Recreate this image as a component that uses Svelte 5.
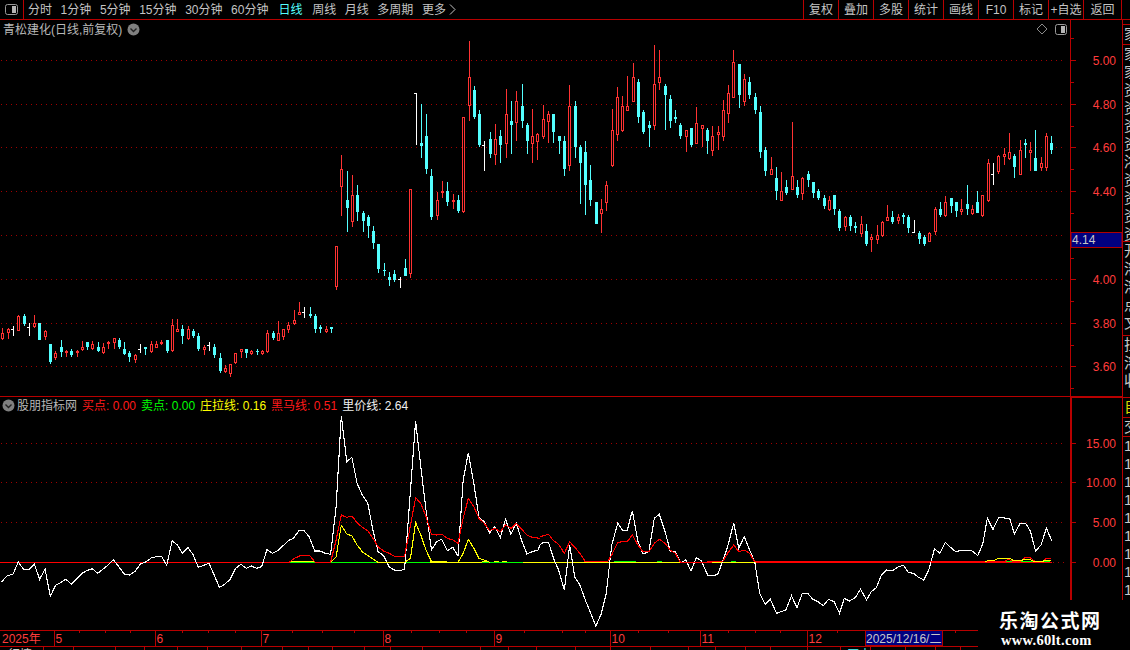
<script>
  const tools = ['分时','1分钟','5分钟','15分钟','30分钟','60分钟','日线','周线','月线','多周期','更多'];
  const actions = ['复权','叠加','多股','统计','画线','F10','标记','+自选','返回'];

  // [type, high, low, bodyTop, bodyBottom] in 3x crop coordinates; w = [type, high, low, tick]
  const partA = [['r',145,180,160,177],['r',145,178,148,160],['w',140,168,148],['r',105,155,108,155],['c',102,140,108,134],['w',130,168,142],['r',105,146,130,143],['c',130,180,130,180],['r',150,180,154,172],['c',192,252,192,247],['r',215,240,220,236],['c',180,233,201,218],['r',210,233,213,221],['c',208,233,214,226],['r',210,233,214,221],['r',183,213,202,210],['c',186,212,186,201],['r',184,210,193,209],['c',186,218,201,213],['r',190,222,202,220],['r',183,207,186,194],['r',175,207,175,189],['c',175,207,180,201],['c',186,225,207,224],['c',214,246,220,233],['r',222,251,226,242],['w',192,219,208],['c',201,225,201,207],['r',183,219,192,216],['r',184,206,193,204],['r',180,196,186,194],['c',180,219,180,213],['r',117,216,135,215],['r',117,158,148,156],['c',136,192,148,168],['r',139,180,148,177],['c',148,174,154,168],['c',160,213,168,207],['r',195,225,201,210],['w',186,213,195],['c',192,234,201,225],['c',219,279,234,273],['r',255,280,264,276],['r',252,291,252,282],['r',220,252,220,249],['r',207,234,208,216],['c',207,234,207,219],['r',210,225,213,222],['c',207,225,213,218],['r',212,225,213,222],['r',150,219,159,216],['c',153,181,159,175],['r',123,183,159,183],['r',147,180,148,171],['r',126,159,135,150],['r',90,135,121,133],['r',66,107,96,105],['w',81,114,97],['c',81,114,102,108],['c',102,159,108,147],['c',136,159,141,147],['r',139,159,148,156],['c',141,159,141,147]];
  const partB = [['r',619,750,619,743],['r',345,530,388,443],['c',393,578,480,506],['r',405,563,465,548],['c',435,545,465,518],['c',513,578,519,545],['c',525,596,531,558],['c',558,629,573,611],['c',612,700,612,689],['c',670,710,690,695],['c',697,740,711,722],['c',690,728,702,722],['w',712,745,717],['c',657,710,684,710],['r',447,716,448,704],['w',160,315,160],['c',192,354,309,320],['c',222,402,288,387],['c',387,540,408,531],['r',456,540,480,528],['r',423,474,453,461],['c',426,498,453,486],['r',462,507,480,488],['c',465,519,480,513],['r',232,519,232,516],['r',3,243,111,199],['c',138,237,150,231],['c',210,321,222,315],['w',303,393,316],['c',276,354,297,342],['r',252,375,297,345],['c',270,369,288,315],['r',147,354,222,312],['c',183,342,243,255],['r',153,303,183,249],['c',132,264,198,243],['c',249,342,255,303],['r',207,369,288,312],['r',279,360,282,306],['r',195,297,237,291],['r',213,309,222,246],['c',222,309,222,276],['c',288,342,288,303],['c',288,408,303,387],['r',135,393,198,378],['c',183,354,198,321],['c',315,492,321,369],['c',303,525,336,435],['c',375,498,420,480],['c',486,552,486,552],['r',477,579,507,522],['r',423,513,435,489],['r',207,381,270,378],['r',141,303,171,285],['r',168,276,198,273],['r',108,213,198,213],['r',69,186,111,186],['c',117,249,126,231],['c',210,282,216,276],['c',243,321,255,264],['r',15,270,132,258],['r',30,150,111,129],['c',132,270,138,165],['c',165,264,177,243],['c',210,249,231,237],['c',249,297,255,288],['r',270,336,270,291],['c',264,321,264,316],['r',201,312,249,312],['r',255,321,255,267],['c',264,342,270,303],['r',258,348,288,333],['r',258,330,276,285],['r',180,303,210,291],['r',135,249,159,222],['r',30,174,66,174],['c',72,204,72,165],['r',102,198,117,186],['c',111,177,126,165],['c',159,222,171,210],['c',198,354,216,336],['c',321,408,330,393],['r',351,405,387,405],['c',381,480,414,453],['r',396,483,453,483],['c',420,465,441,459],['r',246,450,408,450],['c',420,474,441,465],['r',411,480,414,462],['c',393,441,402,420],['c',426,474,426,459],['c',447,480,453,474],['c',465,507,474,498],['r',468,513,480,510],['c',465,525,465,507],['c',507,573,513,564],['r',528,573,531,561],['c',525,573,531,558],['c',546,579,558,564],['r',528,591,552,582],['c',552,618,573,612],['r',582,636,591,600],['r',555,612,585,600],['r',543,591,546,588],['r',495,543,531,543],['c',513,552,531,546],['r',522,552,531,543],['c',519,552,525,531],['c',525,579,531,564],['w',540,579,576],['c',573,612,579,597],['c',585,618,591,612],['r',576,606,579,606],['r',501,585,507,576],['c',486,531,507,525],['r',468,531,486,528],['c',474,519,474,498],['c',486,531,486,513],['r',477,525,507,516],['c',435,525,492,507],['r',495,525,507,522],['c',453,519,486,519],['r',465,531,465,528],['r',357,486,369,483],['w',369,435,403],['r',345,402,348,396],['r',324,375,342,351],['r',279,360,336,357],['c',342,414,348,381],['r',300,405,330,405],['c',297,354,309,315],['r',306,393,330,339],['c',270,393,354,393],['r',351,393,369,384],['r',279,393,288,384],['c',288,342,309,330]];

  const toY = (v, off) => Math.floor(off + v / 3);
  const candles = [
    ...partA.map((c) => ({ c, off: 280 })),
    ...partB.map((c) => ({ c, off: 40 }))
  ].map(({ c, off }, i) => ({
    kind: c[0],
    x: Math.round(2.33 + 5.298 * i),
    high: toY(c[1], off),
    low: toY(c[2], off),
    top: toY(c[3], off),
    bottom: toY(c[4], off)
  }));

  const priceGrid = [60,104,147,191,235,279,323,366];
  const priceLabels = [[60,'5.00'],[104,'4.80'],[147,'4.60'],[191,'4.40'],[279,'4.00'],[323,'3.80'],[366,'3.60']];
  const priceMinor = [82,126,169,213,258,301,345,388,38];

  const S1 = 2.904;
  const S2 = 2.958;
  const pts = (arr, ox, oy, sx) => {
    let s = '';
    for (let i = 0; i < arr.length; i += 2) s += (ox + arr[i] / sx).toFixed(1) + ',' + (oy + arr[i + 1] / 3).toFixed(1) + ' ';
    return s;
  };

  const white1 = [5,515,20,498,38,492,53,455,68,478,85,478,100,463,115,508,131,478,146,559,162,525,176,518,191,508,207,522,238,490,252,482,268,476,284,490,315,464,329,449,345,470,361,492,376,495,392,484,408,462,425,455,440,443,455,440,470,440,484,466,500,392,515,405,530,430,546,412,561,435,576,472,592,466,607,460,622,495,637,532,653,523,668,508,684,475,700,463,715,475,730,468,745,475,760,470,775,419,791,430,806,422,822,407,837,392,852,385,868,362,883,362,898,380,914,423,929,423,945,430,960,433,976,290,991,18,1007,155,1022,142,1037,220,1052,255,1068,280,1083,360,1098,425,1114,437,1130,470,1145,480,1160,482,1175,478,1192,240,1207,34,1222,170,1237,300,1253,420,1268,395,1283,388,1299,422,1315,412,1330,438,1345,210,1360,128,1376,220,1391,322,1406,335,1422,368,1437,350,1453,382,1468,328,1484,373,1499,338,1515,392,1530,432,1545,425,1563,420,1568,405];
  const white2 = [0,165,10,157,25,157,40,205,55,240,72,300,88,165,103,262,118,285,134,330,150,370,165,408,181,372,196,310,212,165,230,100,245,122,258,122,273,62,290,155,305,192,322,185,338,85,353,73,370,125,385,183,400,185,416,218,431,210,447,243,462,203,477,212,497,258,525,254,540,215,555,170,573,100,588,175,604,140,620,180,635,215,650,310,666,343,681,327,700,370,727,360,744,317,760,353,776,310,792,310,806,327,822,335,838,347,853,328,870,335,886,370,900,325,916,333,933,322,948,298,966,330,980,305,995,293,1010,255,1025,240,1041,243,1057,232,1075,226,1090,248,1105,250,1120,262,1135,270,1150,240,1167,176,1183,190,1199,157,1214,172,1230,185,1245,181,1276,181,1295,197,1310,160,1323,85,1340,118,1357,82,1375,84,1390,87,1403,132,1420,100,1436,100,1450,122,1466,183,1482,165,1498,115,1514,152];
  const red1 = [840,457,855,445,870,438,885,436,900,437,915,457,960,457,976,390,991,315,1007,322,1022,318,1037,338,1052,352,1068,362,1083,385,1098,410,1114,423,1130,430,1145,439,1160,439,1175,439,1192,345,1207,263,1222,280,1237,320,1253,373,1268,375,1283,373,1299,385,1315,390,1330,400,1345,325,1360,265,1376,290,1391,325,1406,340,1422,362,1437,355,1453,365,1468,345,1484,355,1499,340,1515,358,1530,375,1545,382,1568,385];
  const red2 = [0,140,25,133,40,152,55,163,72,190,88,155,103,172,118,190,134,215,200,215,212,195,230,157,245,155,258,155,273,135,290,165,305,185,322,185,338,160,353,148,370,160,385,180,400,190,416,218,540,215,555,190,573,165,588,185,604,180,620,190,635,215,1375,215,1385,207,1400,215,1420,215,1435,203,1450,203,1465,215,1485,215,1498,205,1510,207];
  const yellow1 = [960,457,976,440,991,346,1007,372,1022,378,1037,405,1052,425,1068,437,1083,447,1098,457,1175,457,1192,445,1207,338,1222,375,1237,420,1253,455,1330,457,1345,430,1360,388,1376,415,1391,445,1406,450,1422,457];
  const yellow2 = [1315,215,1330,211,1345,211,1355,205,1390,205,1400,212,1420,212,1430,209,1450,209,1462,215,1485,215,1495,211,1510,212];

  const lowerLabels = [[443,'15.00'],[482,'10.00'],[522,'5.00'],[562,'0.00']];
  const segments = [
    { x1: 0, x2: 289, color: '#ff0000' },
    { x1: 289, x2: 315, color: '#00ff00' },
    { x1: 315, x2: 331, color: '#ff0000' },
    { x1: 331, x2: 377, color: '#00ff00' },
    { x1: 377, x2: 406, color: '#ffff00' },
    { x1: 406, x2: 430, color: '#00ff00' },
    { x1: 430, x2: 482, color: '#ffff00' },
    { x1: 482, x2: 523, color: '#00ff00' },
    { x1: 523, x2: 756, color: '#ffff00' },
    { x1: 756, x2: 1052, color: '#ff0000' }
  ];
  const greenBits = [[614,22],[657,5],[731,5],[1005,8],[1020,14],[1042,8]];
  const yellowBits = [[289,26],[430,14],[482,5],[494,5],[502,5]];

  const months = [[54,'5'],[155,'6'],[261,'7'],[383,'8'],[494,'9'],[610,'10'],[700,'11'],[807,'12']];
  const topTicks = [79,105,130,182,208,235,292,322,354,411,439,466,524,562,585,638,668,728,755,780,837,955];
  const bottomTicks = [43,73,115,144,177,207,241,282,308,332,364,390,422,480,508,536,575,610,650,688,715,745,770,807,840,870,905,935,960];

  const sideSections = [
    { h: 5, chars: '', cls: '' },
    { h: 20, chars: '家', cls: '' },
    { h: 197, chars: '家家资资资资浓资资资资', cls: '' },
    { h: 94, chars: '开溶溶点文', cls: '' },
    { h: 62, chars: '拉溶收', cls: '' },
    { h: 20, chars: '自', cls: 'gold' },
    { h: 19, chars: '交', cls: '' },
    { h: 213, chars: '1111111111', cls: 'digits' }
  ];
</script>

<div class="screen">
  <header class="toolbar">
    <div class="corner">
      <svg width="14" height="12" viewBox="0 0 14 12">
        <rect x="0.5" y="0.5" width="12" height="10" rx="2" fill="none" stroke="#9a9a9a" />
        <rect x="7" y="2" width="4" height="7" fill="#b5b5b5" />
      </svg>
    </div>
    <nav class="periods">
      {#each tools as t}
        <span class:active={t === '日线'}>{t}</span>
      {/each}
      <svg class="more" width="7" height="11" viewBox="0 0 7 11">
        <path d="M1 .5 6 5.5 1 10.5" fill="none" stroke="#c4c4c4" />
      </svg>
    </nav>
    <div class="actions">
      {#each actions as a}
        <span>{a}</span>
      {/each}
    </div>
  </header>

  <div class="workspace">
    <div class="charts">
      <section class="panel price">
        <div class="legend">
          <span class="name">青松建化(日线,前复权)</span>
          <svg class="chev" width="13" height="13" viewBox="0 0 13 13">
            <circle cx="6.5" cy="6.5" r="6" fill="#808080" />
            <path d="M3.5 5.5 6.5 8.5 9.5 5.5" fill="none" stroke="#222" stroke-width="1.4" />
          </svg>
        </div>
        <svg class="plot" width="1070" height="376" viewBox="0 20 1070 376" shape-rendering="crispEdges">
          {#each priceGrid as y}
            <line x1="1" x2="1066" y1={y + 0.5} y2={y + 0.5} class="dots" />
          {/each}
          <path d="M1042 24 1047 29 1042 34 1037 29Z" fill="none" stroke="#8a8a8a" shape-rendering="auto" />
          <rect x="1055.5" y="24.5" width="11" height="10" rx="2" fill="none" stroke="#9a9a9a" shape-rendering="auto" />
          <rect x="1061" y="26" width="4" height="7" fill="#b5b5b5" />
          {#each candles as k}
            {#if k.kind === 'w'}
              <rect x={k.x} y={k.high} width="1" height={k.low - k.high} fill="#fff" />
              <rect x={k.x - 2} y={k.top} width="2" height="1" fill="#fff" />
            {:else}
              <rect x={k.x} y={k.high} width="1" height={k.low - k.high} fill={k.kind === 'r' ? '#ff3232' : '#54ffff'} />
              {#if k.kind === 'r'}
                <rect x={k.x - 0.5} y={k.top + 0.5} width="2" height={Math.max(k.bottom - k.top - 1, 1)} fill="#000" stroke="#ff3232" />
              {:else}
                <rect x={k.x - 1} y={k.top} width="3" height={Math.max(k.bottom - k.top, 1)} fill="#54ffff" />
              {/if}
            {/if}
          {/each}
        </svg>
        <svg class="axis" width="52" height="376" viewBox="1070 20 52 376">
          <rect x="1070" y="20" width="1" height="376" class="red" />
          {#each priceMinor as y}
            <rect x="1071" y={y} width="3" height="1" class="red" />
          {/each}
          {#each priceLabels as [y, label]}
            <rect x="1071" y={y} width="5" height="1" class="red" />
            <text x="1116" y={y + 5} text-anchor="end" class="tick">{label}</text>
          {/each}
          <rect x="1071" y="232.5" width="51" height="15" fill="#000080" stroke="#b00000" />
          <text x="1072" y="244" class="last">4.14</text>
        </svg>
      </section>

      <section class="panel indicator">
        <div class="legend">
          <svg class="chev first" width="13" height="13" viewBox="0 0 13 13">
            <circle cx="6.5" cy="6.5" r="6" fill="#808080" />
            <path d="M3.5 5.5 6.5 8.5 9.5 5.5" fill="none" stroke="#222" stroke-width="1.4" />
          </svg>
          <span class="name">股朋指标网</span>
          <span class="red-t">买点: 0.00</span>
          <span class="green-t">卖点: 0.00</span>
          <span class="yellow-t">庄拉线: 0.16</span>
          <span class="red-t">黑马线: 0.51</span>
          <span class="white-t">里价线: 2.64</span>
        </div>
        <svg class="plot" width="1070" height="233" viewBox="0 397 1070 233" shape-rendering="crispEdges">
          {#each lowerLabels.slice(0, 3) as [y]}
            <line x1="1" x2="1066" y1={y + 0.5} y2={y + 0.5} class="dots" />
          {/each}
          <line x1="1053" x2="1066" y1="562.5" y2="562.5" class="dots" />
          {#each segments as s}
            <rect x={s.x1} y="562" width={s.x2 - s.x1} height="1.4" fill={s.color} />
          {/each}
          {#each greenBits as [x, w]}
            <rect x={x} y="561" width={w} height="1" fill="#00ff00" />
          {/each}
          {#each yellowBits as [x, w]}
            <rect x={x} y="561" width={w} height="1" fill="#ffff00" />
          {/each}
          <polyline points={pts(white1, 0, 410, S1)} class="ln white" />
          <polyline points={pts(white2, 540, 490, S2)} class="ln white" />
          <polyline points={pts(red1, 0, 410, S1)} class="ln redl" />
          <polyline points={pts(red2, 540, 490, S2)} class="ln redl" />
          <polyline points={pts(yellow1, 0, 410, S1)} class="ln yel" />
          <polyline points={pts(yellow2, 540, 490, S2)} class="ln yel" />
        </svg>
        <svg class="axis" width="52" height="233" viewBox="1070 397 52 233">
          <rect x="1070" y="397" width="2" height="233" class="red" />
          <rect x="1070" y="397" width="52" height="1" class="red" />
          {#each lowerLabels as [y, label]}
            <rect x="1072" y={y} width="4" height="1" class="red" />
            <text x="1116" y={y + 5} text-anchor="end" class="tick">{label}</text>
          {/each}
        </svg>
      </section>
    </div>

    <aside class="side">
      {#each sideSections as s}
        <div class="cell {s.cls}" style:height="{s.h}px">
          {#each s.chars as ch}
            <div class="glyph">{ch}</div>
          {/each}
        </div>
      {/each}
    </aside>
  </div>

  <svg class="timeline" width="1130" height="20" viewBox="0 630 1130 20">
    <rect x="0" y="630" width="978" height="1" class="red" />
    <rect x="0" y="646" width="978" height="1" class="red" />
    {#each topTicks as x}
      <rect x={x} y="631" width="1" height="2" class="red" />
    {/each}
    {#each bottomTicks as x}
      <rect x={x} y="647" width="1" height="3" class="red" />
    {/each}
    <text x="2" y="643" class="tick">2025年</text>
    {#each months as [x, label]}
      <rect x={x} y="631" width="1" height="15" class="red" />
      <text x={x + 1.5} y="643" class="tick">{label}</text>
    {/each}
    <rect x="865.5" y="630.5" width="77" height="15" fill="#000080" stroke="#b00000" />
    <text x="866" y="643" class="last">2025/12/16/二</text>
    <text x="8" y="659" class="stub">行情</text>
    <text x="847" y="659" class="stub cy">历史</text>
  </svg>

  <div class="mark">
    <div class="mark-cn">乐淘公式网</div>
    <div class="mark-en">www.60lt.com</div>
  </div>
</div>

<style>
  :global(body) {
    margin: 0;
    background: #000;
  }
  .screen {
    position: relative;
    width: 1130px;
    height: 650px;
    overflow: hidden;
    background: #000;
    color: #c4c4c4;
    font: 12px/1 "Liberation Sans", "Noto Sans CJK SC", sans-serif;
    display: flex;
    flex-direction: column;
  }
  svg {
    display: block;
    flex: none;
  }
  .toolbar {
    flex: none;
    height: 19px;
    border-bottom: 1px solid #b80000;
    display: flex;
    align-items: stretch;
  }
  .corner {
    width: 23px;
    border-right: 1px solid #b80000;
    display: flex;
    align-items: center;
    justify-content: center;
  }
  .periods {
    display: flex;
    align-items: center;
    gap: 8.6px;
    margin-left: 4px;
  }
  .periods span {
    white-space: nowrap;
  }
  .periods .active {
    color: #54ffff;
    margin: 0 1px 0 1.5px;
  }
  .more {
    margin-left: -6px;
  }
  .actions {
    display: flex;
    margin-left: auto;
    margin-right: 8px;
    border-right: 1px solid #b80000;
  }
  .actions span {
    width: 34px;
    border-left: 1px solid #b80000;
    display: flex;
    align-items: center;
    justify-content: center;
    white-space: nowrap;
  }
  .actions span:last-child {
    width: 37px;
  }
  .workspace {
    flex: none;
    height: 610px;
    display: flex;
  }
  .charts {
    width: 1122px;
    display: flex;
    flex-direction: column;
  }
  .panel {
    position: relative;
    display: flex;
  }
  .price {
    height: 376px;
  }
  .indicator {
    height: 233px;
    border-top: 1px solid #b80000;
  }
  .legend {
    position: absolute;
    top: 3px;
    left: 3px;
    display: flex;
    align-items: center;
    gap: 5px;
    white-space: nowrap;
    z-index: 1;
  }
  .indicator .legend {
    top: 2px;
    left: 2px;
  }
  .first {
    margin-right: -3px;
  }
  .name {
    color: #b8b8b8;
  }
  .red-t { color: #ff1a1a; }
  .green-t { color: #00ff00; }
  .yellow-t { color: #ffff00; }
  .white-t { color: #f0f0f0; }
  .dots {
    stroke: #a00000;
    stroke-width: 1;
    stroke-dasharray: 1 4;
  }
  .red {
    fill: #b80000;
  }
  .tick {
    fill: #ff3c3c;
    font-size: 12px;
  }
  .last {
    fill: #c8c8c8;
    font-size: 12px;
  }
  .stub {
    fill: #ccc;
    font-size: 12px;
  }
  .cy {
    fill: #54ffff;
  }
  .ln {
    fill: none;
    stroke-width: 1.1;
  }
  .white { stroke: #fff; }
  .redl { stroke: #ff0000; }
  .yel { stroke: #ffff00; }
  .side {
    flex: 1;
    overflow: hidden;
    border-left: 1px solid #b80000;
  }
  .cell {
    border-bottom: 1px solid #b80000;
    box-sizing: border-box;
    overflow: hidden;
    padding-left: 1px;
  }
  .glyph {
    height: 18px;
    font-size: 15px;
    line-height: 18px;
    color: #c8c8c8;
  }
  .gold .glyph {
    color: #d8d800;
  }
  .digits {
    border-bottom: 0;
  }
  .mark {
    position: absolute;
    right: 0;
    bottom: 0;
    width: 152px;
    height: 50px;
    background: #000;
    color: #fff;
    box-sizing: border-box;
    padding: 9px 0 0 21px;
  }
  .mark-cn {
    font: bold 19px/22px "Noto Sans CJK SC", sans-serif;
    letter-spacing: 1.5px;
  }
  .mark-en {
    margin: 1px 0 0 2px;
    font: bold 14.5px/16px "Liberation Serif", serif;
    letter-spacing: 0.3px;
  }
</style>
